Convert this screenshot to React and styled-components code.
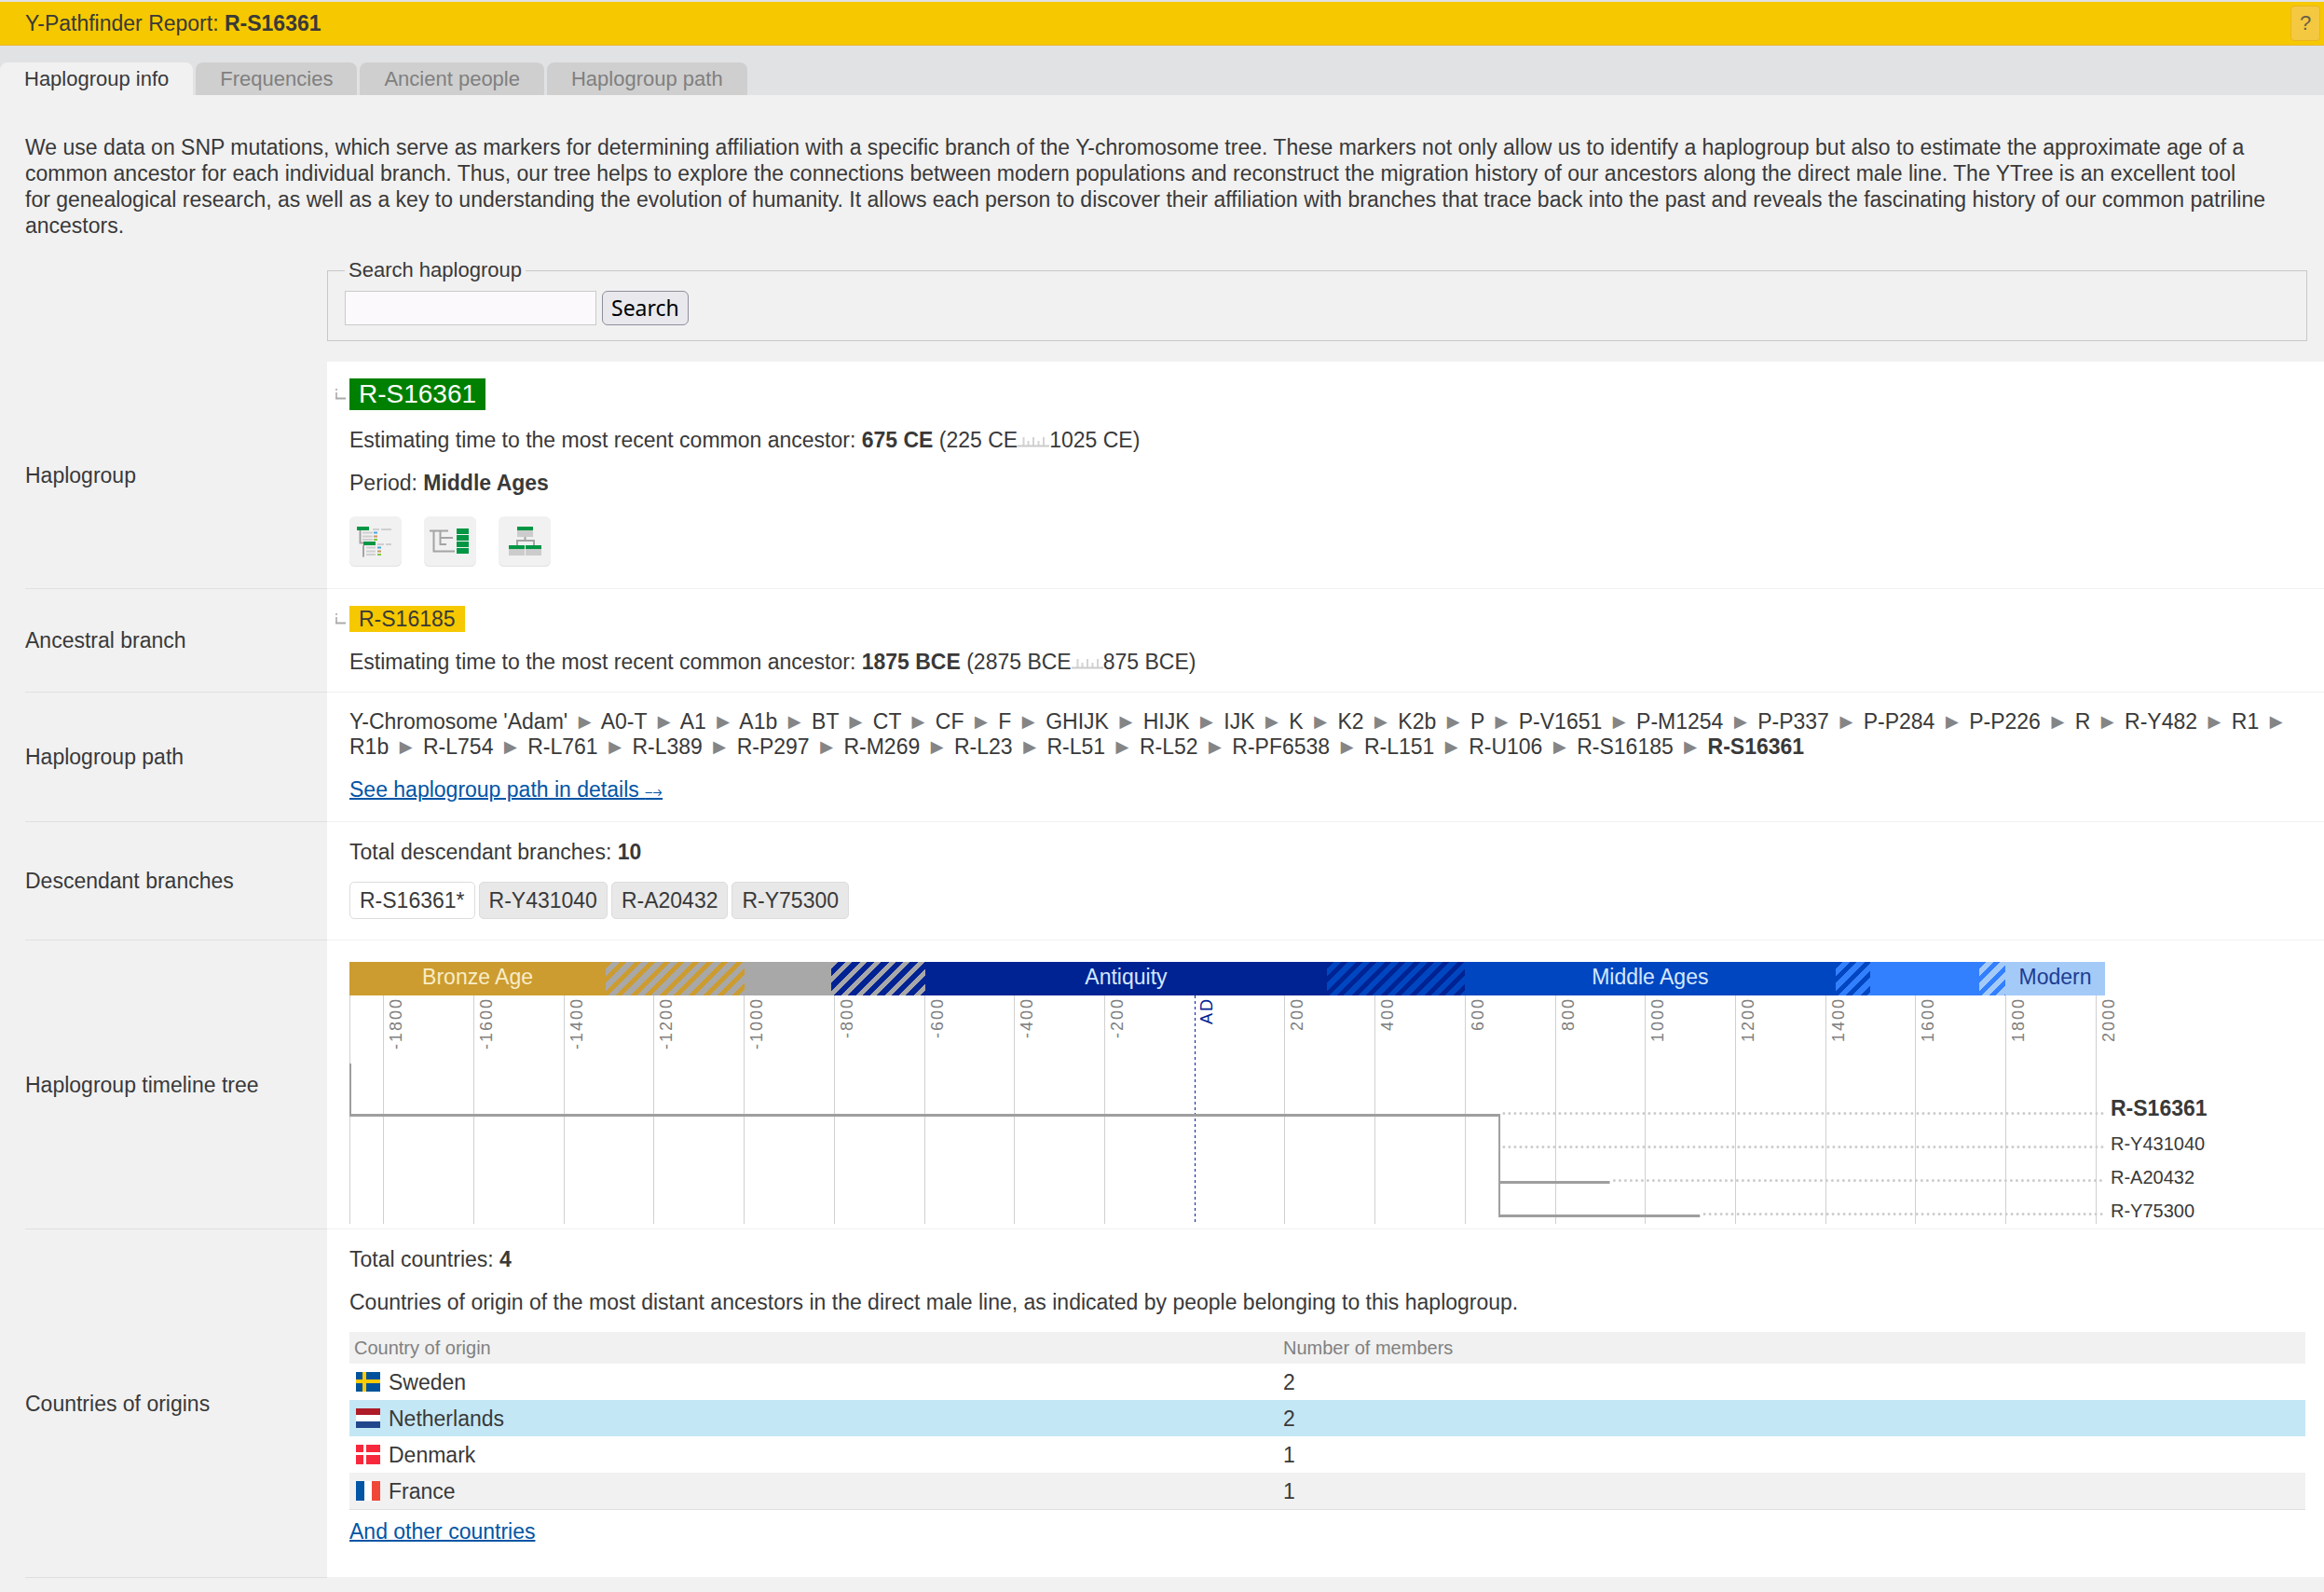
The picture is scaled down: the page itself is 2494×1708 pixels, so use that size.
import { Fragment } from 'react'
import styled, { createGlobalStyle, css } from 'styled-components'

const START_YEAR = -1875
const END_YEAR = 2021
const BRANCH_YEAR = 677

const toPercent = (year) =>
  `${((year - START_YEAR) / (END_YEAR - START_YEAR)) * 100}%`

const tabs = ['Haplogroup info', 'Frequencies', 'Ancient people', 'Haplogroup path']

const path = [
  "Y-Chromosome 'Adam'", 'A0-T', 'A1', 'A1b', 'BT', 'CT', 'CF', 'F', 'GHIJK',
  'HIJK', 'IJK', 'K', 'K2', 'K2b', 'P', 'P-V1651', 'P-M1254', 'P-P337',
  'P-P284', 'P-P226', 'R', 'R-Y482', 'R1', 'R1b', 'R-L754', 'R-L761', 'R-L389',
  'R-P297', 'R-M269', 'R-L23', 'R-L51', 'R-L52', 'R-PF6538', 'R-L151',
  'R-U106', 'R-S16185',
]

const descendants = ['R-S16361*', 'R-Y431040', 'R-A20432', 'R-Y75300']

const periods = [
  { years: 569, bg: '#cc9c30', color: '#f8ecc8', name: 'Bronze Age' },
  { years: 308, bg: '#cc9c30', stripe: '#a8a8a8' },
  { years: 192, bg: '#a8a8a8' },
  { years: 209, bg: '#a8a8a8', stripe: '#002394' },
  { years: 891, bg: '#002394', color: '#d4e8ff', name: 'Antiquity' },
  { years: 306, bg: '#002394', stripe: '#0046c0' },
  { years: 823, bg: '#0046c0', color: '#d4e8ff', name: 'Middle Ages' },
  { years: 77, bg: '#0046c0', stripe: '#3380ff' },
  { years: 242, bg: '#3380ff' },
  { years: 58, bg: '#3380ff', stripe: '#a4caf8' },
  { years: 221, bg: '#a4caf8', color: '#203c90', name: 'Modern' },
]

const ticks = Array.from({ length: 20 }, (_, i) => -1800 + i * 200)

// y is measured from the top of the chart, right under the period bar
const branches = [
  { name: 'R-S16361', from: START_YEAR, to: BRANCH_YEAR, y: 128 },
  { name: 'R-Y431040', from: BRANCH_YEAR, to: BRANCH_YEAR, y: 164 },
  { name: 'R-A20432', from: BRANCH_YEAR, to: 922, y: 200 },
  { name: 'R-Y75300', from: BRANCH_YEAR, to: 1122, y: 236 },
]

const countries = [
  { name: 'Sweden', count: 2, flag: 'se' },
  { name: 'Netherlands', count: 2, flag: 'nl' },
  { name: 'Denmark', count: 1, flag: 'dk' },
  { name: 'France', count: 1, flag: 'fr' },
]

export default function App() {
  return (
    <>
      <GlobalStyle />
      <Header>
        <Title>
          Y-Pathfinder Report: <b>R-S16361</b>
        </Title>
        <HelpButton type="button">?</HelpButton>
      </Header>
      <TabBar>
        {tabs.map((tab, i) => (
          <Tab key={tab} type="button" $active={i === 0}>
            {tab}
          </Tab>
        ))}
      </TabBar>

      <Main>
        <Intro>
          We use data on SNP mutations, which serve as markers for determining
          affiliation with a specific branch of the Y-chromosome tree. These
          markers not only allow us to identify a haplogroup but also to
          estimate the approximate age of a common ancestor for each individual
          branch. Thus, our tree helps to explore the connections between
          modern populations and reconstruct the migration history of our
          ancestors along the direct male line. The YTree is an excellent tool
          for&nbsp;genealogical research, as well as a key to understanding the
          evolution of humanity. It allows each person to discover their
          affiliation with branches that trace back into the past and reveals
          the fascinating history of our common patriline ancestors.
        </Intro>

        <SearchBox>
          <legend>Search haplogroup</legend>
          <SearchInput type="text" aria-label="Search haplogroup" />
          <SearchButton type="button">Search</SearchButton>
        </SearchBox>

        <Row>
          <Label>Haplogroup</Label>
          <Content>
            <BranchLine>
              <CornerIcon />
              <Badge $large>R-S16361</Badge>
            </BranchLine>
            <Text>
              Estimating time to the most recent common ancestor:{' '}
              <b>675 CE</b> (225 CE
              <RulerIcon />
              1025 CE)
            </Text>
            <Text>
              Period: <b>Middle Ages</b>
            </Text>
            <IconList>
              <IconButton type="button" aria-label="Detailed tree">
                <DetailedTreeIcon />
              </IconButton>
              <IconButton type="button" aria-label="Timeline tree">
                <TimelineTreeIcon />
              </IconButton>
              <IconButton type="button" aria-label="Classic tree">
                <ClassicTreeIcon />
              </IconButton>
            </IconList>
          </Content>
        </Row>

        <Row>
          <Label>Ancestral branch</Label>
          <Content>
            <BranchLine>
              <CornerIcon />
              <Badge>R-S16185</Badge>
            </BranchLine>
            <Text>
              Estimating time to the most recent common ancestor:{' '}
              <b>1875 BCE</b> (2875 BCE
              <RulerIcon />
              875 BCE)
            </Text>
          </Content>
        </Row>

        <Row>
          <Label>Haplogroup path</Label>
          <Content>
            <PathText>
              {path.map((name) => (
                <Fragment key={name}>
                  {name} <Arrow>►</Arrow>{' '}
                </Fragment>
              ))}
              <b>R-S16361</b>
            </PathText>
            <Text>
              <Link href="#path">
                See haplogroup path in details <small>⤍</small>
              </Link>
            </Text>
          </Content>
        </Row>

        <Row>
          <Label>Descendant branches</Label>
          <Content>
            <Text>
              Total descendant branches: <b>10</b>
            </Text>
            <ChipList>
              {descendants.map((name, i) => (
                <Chip key={name} href={`#${name}`} $current={i === 0}>
                  {name}
                </Chip>
              ))}
            </ChipList>
          </Content>
        </Row>

        <Row>
          <Label>Haplogroup timeline tree</Label>
          <TimelineContent>
            <Timeline />
            <BranchNames>
              {branches.map((branch, i) => (
                <BranchName key={branch.name} $main={i === 0}>
                  {branch.name}
                </BranchName>
              ))}
            </BranchNames>
          </TimelineContent>
        </Row>

        <Row>
          <Label>Countries of origins</Label>
          <CountriesContent>
            <Text>
              Total countries: <b>4</b>
            </Text>
            <Text>
              Countries of origin of the most distant ancestors in the direct
              male line, as indicated by people belonging to this haplogroup.
            </Text>
            <Table>
              <thead>
                <tr>
                  <th>Country of origin</th>
                  <th>Number of members</th>
                </tr>
              </thead>
              <tbody>
                {countries.map(({ name, count, flag }) => (
                  <CountryRow key={name} $highlight={flag === 'nl'}>
                    <td>
                      <Country>
                        <Flag code={flag} />
                        {name}
                      </Country>
                    </td>
                    <td>{count}</td>
                  </CountryRow>
                ))}
              </tbody>
            </Table>
            <Link href="#countries">And other countries</Link>
          </CountriesContent>
        </Row>
      </Main>
    </>
  )
}

function Timeline() {
  return (
    <div>
      <PeriodBar>
        {periods.map((period, i) => (
          <Period
            key={i}
            $years={period.years}
            $bg={period.bg}
            $stripe={period.stripe}
            $color={period.color}
          >
            {period.name}
          </Period>
        ))}
      </PeriodBar>
      <Chart>
        {ticks.map((year) => (
          <Tick key={year} $zero={year === 0} style={{ left: toPercent(year) }}>
            <span>{year === 0 ? 'AD' : year}</span>
          </Tick>
        ))}
        <Tree>
          <line x1="0.5" x2="0.5" y1="0" y2="245" stroke="#d0d0d0" />
          <line x1="1" x2="1" y1="73" y2="130" stroke="#9e9e9e" strokeWidth="2" />
          <line
            x1={toPercent(BRANCH_YEAR)}
            x2={toPercent(BRANCH_YEAR)}
            y1="127"
            y2="238"
            stroke="#9e9e9e"
            strokeWidth="2"
          />
          {branches.map(({ name, from, to, y }) => (
            <Fragment key={name}>
              {to > from && (
                <line
                  x1={toPercent(from)}
                  x2={toPercent(to)}
                  y1={y + 0.5}
                  y2={y + 0.5}
                  stroke="#9e9e9e"
                  strokeWidth="3"
                />
              )}
              <line
                x1={toPercent(to + 10)}
                x2={toPercent(END_YEAR - 4)}
                y1={y - 1.5}
                y2={y - 1.5}
                stroke="#cccccc"
                strokeWidth="3"
                strokeLinecap="round"
                strokeDasharray="0 6"
              />
            </Fragment>
          ))}
        </Tree>
      </Chart>
    </div>
  )
}

function CornerIcon() {
  return (
    <svg width="12" height="12" viewBox="0 0 12 12">
      <path d="M2 0v2M2 4v7" stroke="#bbb" strokeWidth="2" />
      <path d="M1 10.5h11" stroke="#aaa" strokeWidth="2" />
    </svg>
  )
}

function RulerIcon() {
  return (
    <svg width="34" height="12" viewBox="0 0 34 12">
      <path
        d="M6.5 1v9M11.5 5v5M17 1v9M22.5 5v5M28 1v9"
        stroke="#d4d4d4"
        strokeWidth="2"
      />
      <path d="M0 10.5h34" stroke="#cccccc" strokeWidth="2" />
    </svg>
  )
}

function DetailedTreeIcon() {
  return (
    <svg width="56" height="54" viewBox="0 0 56 54">
      <path d="M11.5 15v13.5h4M15 31v12.5" stroke="#a4a4a4" strokeWidth="2" fill="none" />
      <path
        d="M25 14h7M34 14h11M14 17.5h11M14 21.5h11M14 25h11M30 30h7M39 30h6M18 33.5h10M18 37.5h10M18 41h10"
        stroke="#cfcfcf"
        strokeWidth="2"
      />
      <path d="M8 11h13v4H8zM15 27h13v4H15z" fill="#009644" />
      <path d="M26 17.5h4M30 33.5h4" stroke="#4aa8dc" strokeWidth="2" />
      <path d="M26 21.5h4M30 37.5h4" stroke="#cc9468" strokeWidth="2" />
      <path d="M26 25h4M30 41h4" stroke="#80c840" strokeWidth="2" />
    </svg>
  )
}

function TimelineTreeIcon() {
  return (
    <svg width="56" height="54" viewBox="0 0 56 54">
      <path
        d="M6 15.5h20M10.5 15.5v22H33M17.5 15.5v14.5H24M17.5 23H31"
        stroke="#a4a4a4"
        strokeWidth="2"
        fill="none"
      />
      <path d="M35 13h13v6H35zM35 20h13v6H35zM35 27h13v6H35zM35 34h13v6H35z" fill="#009644" />
    </svg>
  )
}

function ClassicTreeIcon() {
  return (
    <svg width="56" height="54" viewBox="0 0 56 54">
      <path d="M20 15h17v7H20zM11 35h17v7H11zM29 35h17v7H29z" fill="#cccccc" />
      <path d="M28.5 22v4M20 31v-5h18v5" stroke="#a4a4a4" strokeWidth="2" fill="none" />
      <path d="M20 11h17v4H20zM11 31h17v4H11zM29 31h17v4H29z" fill="#009644" />
    </svg>
  )
}

function Flag({ code }) {
  return (
    <svg width="26" height="21" viewBox="0 0 26 21">
      {code === 'se' && (
        <>
          <path d="M0 0h26v21H0z" fill="#00539b" />
          <path d="M7 0h4v21H7zM0 8h26v4H0z" fill="#fecb00" />
        </>
      )}
      {code === 'nl' && (
        <>
          <path d="M0 0h26v7H0z" fill="#ae1c28" />
          <path d="M0 7h26v7H0z" fill="#fff" />
          <path d="M0 14h26v7H0z" fill="#21468b" />
        </>
      )}
      {code === 'dk' && (
        <>
          <path d="M0 0h26v21H0z" fill="#f8283c" />
          <path d="M8 0h3v21H8zM0 8h26v3H0z" fill="#fff" />
        </>
      )}
      {code === 'fr' && (
        <>
          <path d="M0 0h9v21H0z" fill="#0055a5" />
          <path d="M9 0h8v21H9z" fill="#fff" />
          <path d="M17 0h9v21h-9z" fill="#f04838" />
        </>
      )}
    </svg>
  )
}

const GlobalStyle = createGlobalStyle`
  * {
    box-sizing: border-box;
  }

  body {
    margin: 0;
    background: #f1f1f1;
    color: #393939;
    font-family: 'Liberation Sans', Arial, sans-serif;
    font-size: 23px;
    line-height: 28px;
  }
`

const Header = styled.header`
  display: flex;
  align-items: center;
  justify-content: space-between;
  padding: 4px 4px 4px 27px;
  border-top: 2px solid #e1e2e4;
  border-bottom: 1px solid #e6b832;
  background: #f6c800;
`

const Title = styled.h1`
  margin: 0;
  font-size: 23px;
  font-weight: 400;
`

const HelpButton = styled.button`
  width: 32px;
  height: 38px;
  padding: 0;
  border: 1px solid #eab520;
  border-radius: 4px;
  background: #f5c842;
  color: #6b6048;
  font-family: inherit;
  font-size: 22px;
`

const TabBar = styled.nav`
  display: flex;
  gap: 3px;
  padding-top: 18px;
  background: #e1e2e4;
`

const Tab = styled.button`
  height: 35px;
  padding: 0 26px;
  border: 0;
  border-radius: 8px 8px 0 0;
  background: #cfcfcf;
  color: #808080;
  font-family: inherit;
  font-size: 22px;

  ${({ $active }) =>
    $active &&
    css`
      background: #f1f1f1;
      color: #393939;
    `}
`

const Main = styled.main`
  padding: 42px 0 16px 27px;
  border-bottom: 1px solid #dedede;
`

const Intro = styled.p`
  margin: 0;
  padding-right: 40px;
`

const SearchBox = styled.fieldset`
  display: flex;
  gap: 6px;
  margin: 20px 18px 22px 324px;
  padding: 8px 18px 16px;
  border: 1px solid #c8c8c8;

  legend {
    padding: 0 4px;
    font-size: 22px;
  }
`

const SearchInput = styled.input`
  width: 270px;
  height: 37px;
  border: 1px solid #cacaca;
  background: #fbf9fb;
  font-size: 22px;
`

const SearchButton = styled.button`
  height: 37px;
  padding: 0 9px 2px;
  border: 1px solid #8f8f9d;
  border-radius: 6px;
  background: #e9e9ed;
  color: #000;
  font-family: 'Noto Sans', sans-serif;
  font-size: 23px;
  line-height: 32px;
`

const Row = styled.section`
  display: grid;
  grid-template-columns: 324px 1fr;
`

const Label = styled.div`
  display: flex;
  align-items: center;
  border-bottom: 1px solid #e0e0e0;
`

const Content = styled.div`
  display: flex;
  flex-direction: column;
  align-items: flex-start;
  gap: 18px;
  padding: 18px 20px 18px 24px;
  border-bottom: 1px solid #f1f1f1;
  background: #fff;
`

const TimelineContent = styled(Content)`
  display: grid;
  grid-template-columns: 1fr 215px;
  align-items: start;
  gap: 0;
  padding-top: 23px;
  padding-bottom: 5px;
`

const CountriesContent = styled(Content)`
  padding-bottom: 35px;
`

const Text = styled.p`
  margin: 0;

  svg {
    vertical-align: baseline;
  }
`

const PathText = styled(Text)`
  line-height: 27px;
`

const BranchLine = styled.div`
  display: flex;
  align-items: center;
  gap: 4px;
  margin-left: -16px;
`

const Badge = styled.span`
  padding: 0 10px;
  background: ${({ $large }) => ($large ? '#008000' : '#f6c800')};

  ${({ $large }) =>
    $large &&
    css`
      color: #fff;
      font-size: 28px;
      line-height: 34px;
    `}
`

const IconList = styled.div`
  display: flex;
  gap: 24px;
  margin: 4px 0 5px;
`

const IconButton = styled.button`
  display: flex;
  padding: 0;
  border: 0;
  border-radius: 6px;
  background: #f1f1f1;
  box-shadow: inset 0 -1px #e2e2e2;
`

const Arrow = styled.span`
  display: inline-block;
  width: 24px;
  color: #858585;
  text-align: center;
`

const Link = styled.a`
  color: #0055a5;
  text-decoration: underline;
  text-decoration-thickness: 2px;

  small {
    font-size: 18px;
  }
`

const ChipList = styled.div`
  display: flex;
  gap: 4px;
  margin-bottom: 4px;
`

const Chip = styled.a`
  padding: 5px 10px;
  border: 1px solid #dcdcdc;
  border-radius: 5px;
  background: ${({ $current }) => ($current ? '#fff' : '#e8e8e8')};
  color: inherit;
  text-decoration: none;
`

const PeriodBar = styled.div`
  display: flex;
`

const Period = styled.div`
  flex: ${({ $years }) => $years} 1 0;
  min-width: 0;
  height: 36px;
  background: ${({ $bg }) => $bg};
  color: ${({ $color }) => $color};
  line-height: 32px;
  text-align: center;

  ${({ $stripe, $bg }) =>
    $stripe &&
    css`
      background: repeating-linear-gradient(
        135deg,
        ${$bg} 0 5px,
        ${$stripe} 5px 11px
      );
    `}
`

const Chart = styled.div`
  position: relative;
  height: 245px;
`

const Tick = styled.div`
  position: absolute;
  top: 0;
  bottom: 0;
  padding: 2px 0 0 3px;
  border-left: 1px solid #d0d0d0;
  color: #808080;
  font-size: 18px;
  line-height: 20px;
  letter-spacing: 2px;

  span {
    display: block;
    writing-mode: vertical-rl;
    transform: rotate(180deg);
  }

  ${({ $zero }) =>
    $zero &&
    css`
      border-left: 0;
      background: repeating-linear-gradient(#002394 0 3px, transparent 3px 6px)
        left / 1px 100% no-repeat;
      color: #002394;
    `}
`

const Tree = styled.svg`
  position: absolute;
  top: 0;
  left: 0;
  width: 100%;
  height: 100%;
`

const BranchNames = styled.div`
  height: 281px;
  padding: 139px 0 0 6px;
`

const BranchName = styled.div`
  font-size: 20px;
  line-height: 36px;

  ${({ $main }) =>
    $main &&
    css`
      margin-bottom: 2px;
      font-size: 23px;
      font-weight: 700;
    `}
`

const Table = styled.table`
  width: 100%;
  margin-bottom: -9px;
  border-bottom: 1px solid #dedede;
  border-spacing: 0;

  th {
    height: 34px;
    padding: 0 5px;
    background: #f1f1f1;
    color: #808080;
    font-size: 20px;
    font-weight: 400;
    text-align: left;
  }

  th:first-child {
    width: 47.5%;
  }

  td {
    padding: 0 5px;
  }
`

const CountryRow = styled.tr`
  height: 39px;

  &:nth-child(even) {
    background: #f1f1f1;
  }

  ${({ $highlight }) =>
    $highlight &&
    css`
      && {
        background: #c4e7f5;
      }
    `}
`

const Country = styled.span`
  display: flex;
  align-items: center;
  gap: 9px;
  padding-left: 2px;
`
